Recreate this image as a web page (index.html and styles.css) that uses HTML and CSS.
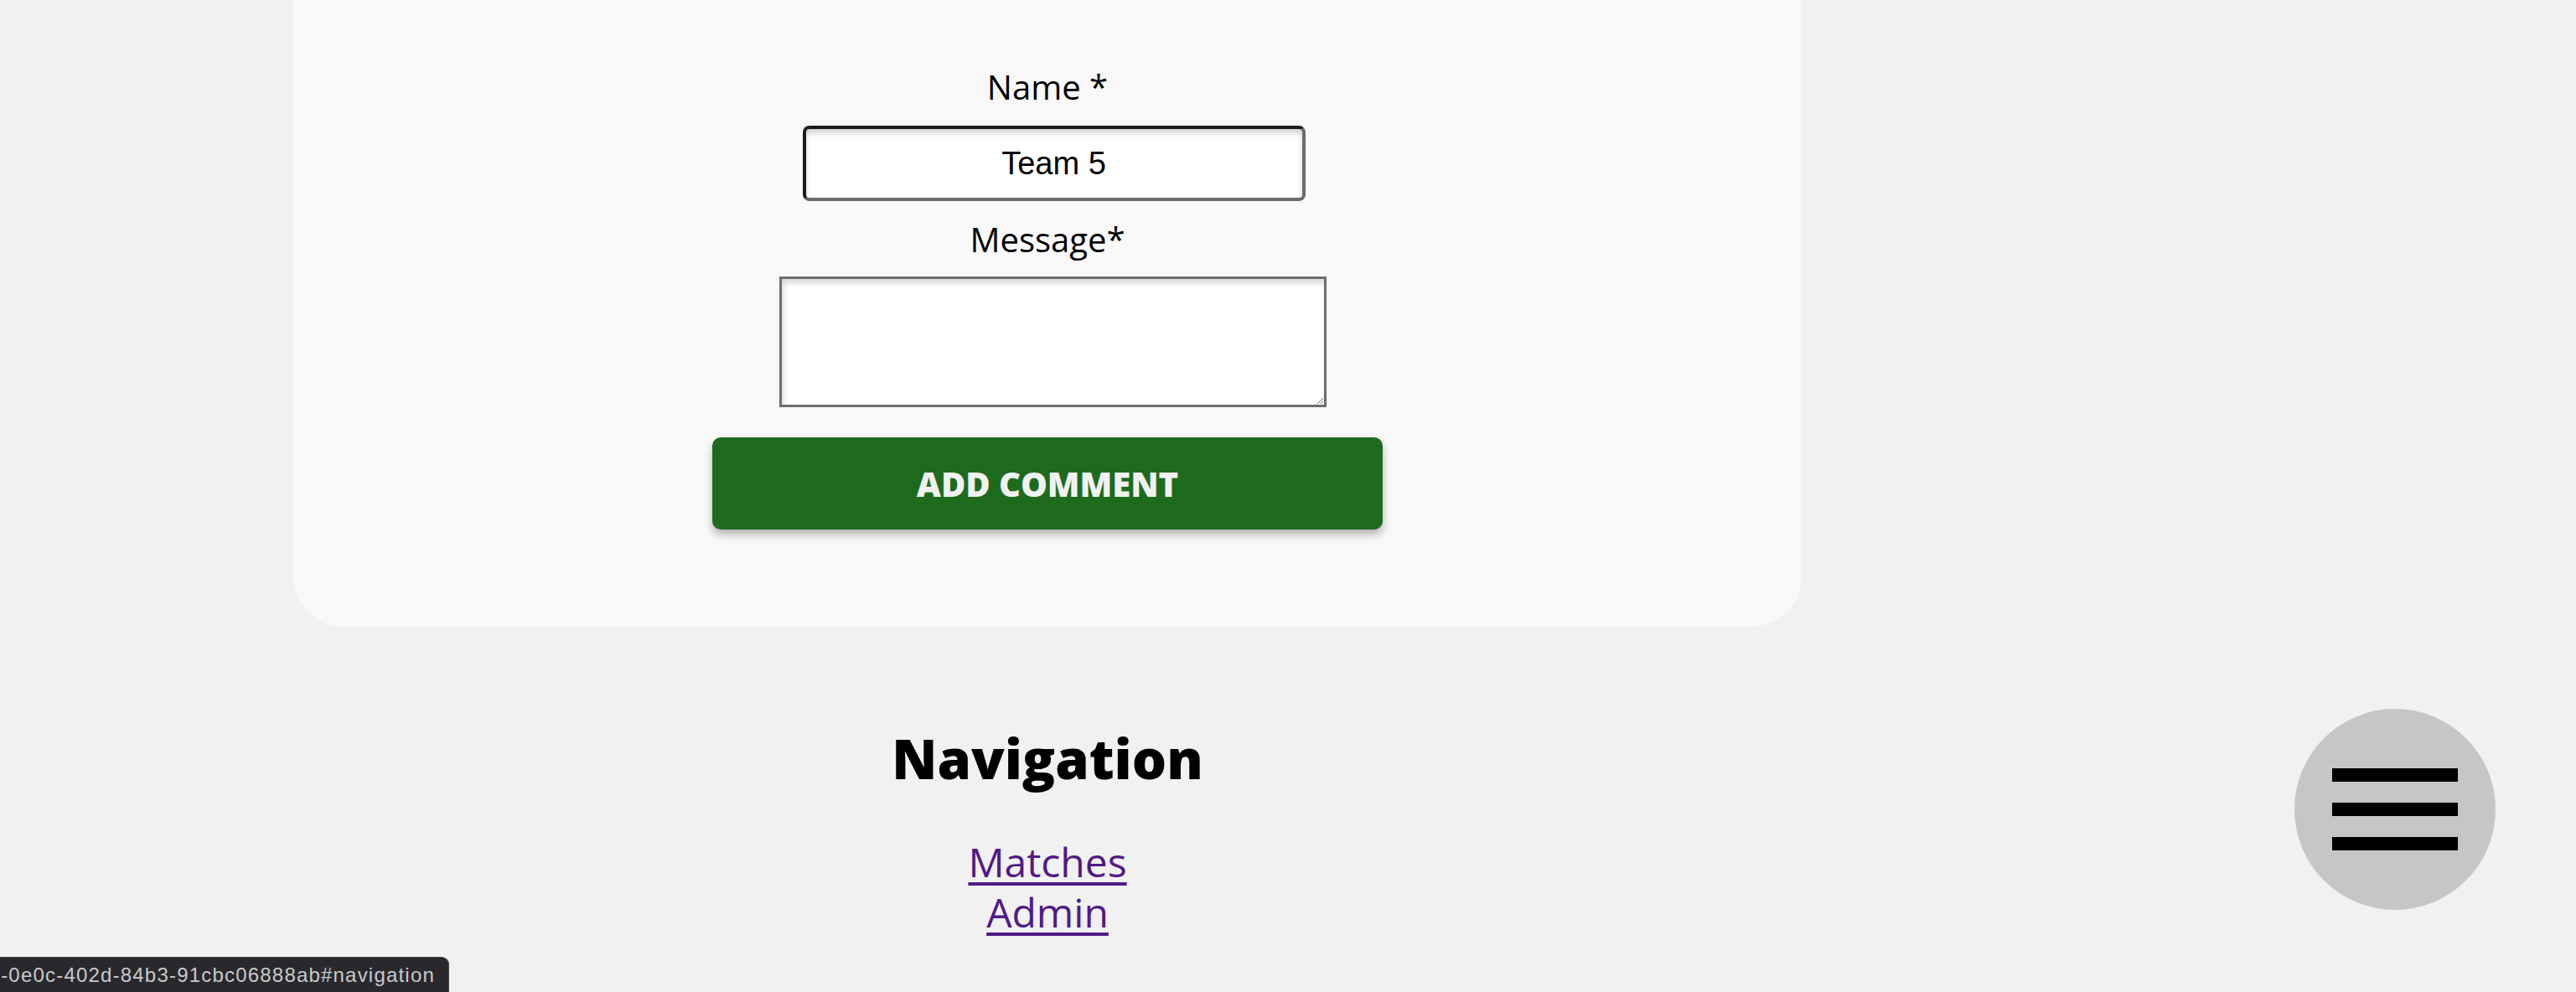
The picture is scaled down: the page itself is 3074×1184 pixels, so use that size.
FILE: index.html
```html
<!DOCTYPE html>
<html lang="en">
<head>
<meta charset="utf-8">
<title>Match comments</title>
<link rel="stylesheet" href="styles.css">
</head>
<body>
<div class="page">
  <section class="card">
    <form class="comment-form">
      <label class="field-label" for="name">Name *</label>
      <input class="name-input" id="name" type="text" value="Team 5">
      <label class="field-label msg-label" for="msg">Message*</label>
      <textarea class="msg-input" id="msg"></textarea>
      <button class="add-btn" type="button">Add comment</button>
    </form>
  </section>
  <nav class="site-nav" id="navigation">
    <h2 class="nav-title">Navigation</h2>
    <ul class="nav-list">
      <li><a class="nav-link" href="#matches">Matches</a></li>
      <li><a class="nav-link" href="#admin">Admin</a></li>
    </ul>
  </nav>
</div>
<button class="menu-fab" type="button" aria-label="Menu">
  <span class="bar"></span><span class="bar"></span><span class="bar"></span>
</button>
<div class="status-bubble"><span class="status-text">-0e0c-402d-84b3-91cbc06888ab#navigation</span></div>
</body>
</html>
```
FILE: styles.css
```css
html, body {
  margin: 0;
  padding: 0;
}
body {
  background: #f1f1f1;
  font-family: "Open Sans", "Noto Sans", sans-serif;
  color: #000;
  height: 1184px;
  overflow: hidden;
}
.page {
  width: 1800px;
  margin-left: 350px;
}
.card {
  background: #f8f8f8;
  border-radius: 0 0 60px 60px;
  padding: 80px 0 116px;
}
.comment-form {
  display: flex;
  flex-direction: column;
  align-items: center;
}
.field-label {
  font-size: 40px;
  line-height: 48px;
  display: block;
}
.name-input {
  box-sizing: border-box;
  margin: 22px 0 0 15px;
  width: 600px;
  height: 90px;
  border: 4px solid #6b6b6b;
  border-top-color: #1c1c1c;
  border-left-color: #1c1c1c;
  border-radius: 8px;
  background: #fff;
  box-shadow: inset 0 5px 6px rgba(0,0,0,0.18);
  font-family: "Liberation Sans", Arial, sans-serif;
  font-size: 38px;
  text-align: center;
  color: #000;
  padding: 0 10px;
  outline: none;
}
.msg-label {
  margin-top: 22px;
}
.msg-input {
  box-sizing: border-box;
  margin: 20px 0 0 12px;
  width: 653px;
  height: 156px;
  border: 3px solid #6e6e6e;
  border-radius: 0;
  background: #fff;
  box-shadow: inset 2px 5px 6px rgba(0,0,0,0.15);
  outline: none;
}
.add-btn {
  margin-top: 36px;
  width: 800px;
  height: 110px;
  border: none;
  border-radius: 10px;
  background: #1e6b1e;
  color: #f1f1f1;
  font-family: "Open Sans", sans-serif;
  font-weight: 800;
  font-size: 40px;
  text-transform: uppercase;
  box-shadow: 0 6px 10px rgba(0,0,0,0.28);
  cursor: pointer;
}
.site-nav {
  display: flex;
  flex-direction: column;
  align-items: center;
}
.nav-title {
  margin: 117px 0 0;
  font-size: 65px;
  line-height: 80px;
  font-weight: 800;
}
.nav-list {
  list-style: none;
  margin: 54px 0 0;
  padding: 0;
  display: flex;
  flex-direction: column;
  align-items: center;
}
.nav-link {
  font-size: 48px;
  line-height: 60px;
  color: #511a86;
  text-decoration: underline;
  text-decoration-thickness: 4px;
  text-underline-offset: 6px;
}
.menu-fab {
  position: fixed;
  right: 96px;
  bottom: 98px;
  width: 240px;
  height: 240px;
  border-radius: 50%;
  border: none;
  background: #c6c6c6;
  padding: 0;
  display: flex;
  flex-direction: column;
  align-items: center;
  justify-content: center;
  gap: 25px;
}
.bar {
  display: block;
  width: 150px;
  height: 16px;
  background: #000;
}
.status-bubble {
  position: fixed;
  left: 0;
  bottom: 0;
  width: 536px;
  height: 42px;
  box-sizing: border-box;
  background: #29292d;
  border-top: 1px solid #4a4a4e;
  border-right: 1px solid #4a4a4e;
  border-top-right-radius: 9px;
  overflow: hidden;
  display: flex;
  justify-content: flex-end;
  align-items: center;
  padding-right: 16px;
  white-space: nowrap;
}
.status-text {
  font-family: "Liberation Sans", Arial, sans-serif;
  font-size: 24px;
  letter-spacing: 1.2px;
  color: #c9c9cc;
}
```
